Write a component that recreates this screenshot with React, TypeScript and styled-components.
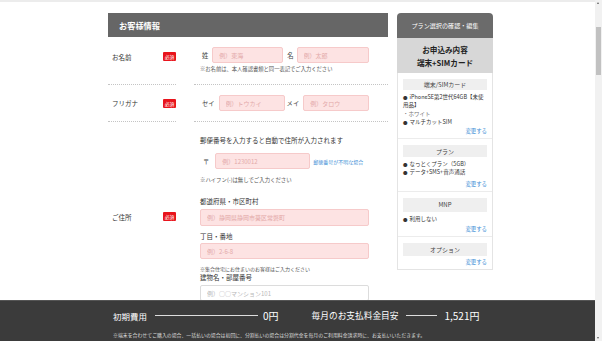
import React from "react";
import styled, { createGlobalStyle } from "styled-components";

const Global = createGlobalStyle`
  html, body { margin: 0; padding: 0; overflow: hidden; background: #fff; }
  body { font-family: "Noto Sans CJK JP", "Noto Sans", sans-serif; color: #333; }
  * { box-sizing: border-box; }
  input { font-family: inherit; }
`;

const Page = styled.div`
  width: 595px;
  height: 341px;
  border-top: 2px solid #ececec;
`;

const Container = styled.div`
  display: flex;
  gap: 9px;
  padding: 11px 0 0 108px;
`;

const Main = styled.section`
  width: 280px;
`;

const MainHeader = styled.h2`
  margin: 0;
  height: 24px;
  background: #666;
  color: #fff;
  font-size: 8.2px;
  font-weight: bold;
  display: flex;
  align-items: center;
  padding-left: 11px;
`;

const FormRow = styled.div`
  display: grid;
  grid-template-columns: 68px 1fr;
  column-gap: 18px;
`;

const LabelCell = styled.div<{ $shift?: number; $last?: boolean }>`
  display: flex;
  align-items: center;
  justify-content: space-between;
  padding-left: 4px;
  padding-bottom: ${(p) => p.$shift ?? 0}px;
  font-size: 6.5px;
  color: #333;
  border-bottom: ${(p) => (p.$last ? "none" : "1px dotted #c4c4c4")};
`;

const Badge = styled.span`
  width: 13px;
  height: 9px;
  background: #e8141c;
  color: #fff;
  font-size: 4.8px;
  display: flex;
  align-items: center;
  justify-content: center;
  border-radius: 1px;
`;

const ContentCell = styled.div<{ $pad: string; $last?: boolean }>`
  padding: ${(p) => p.$pad};
  border-bottom: ${(p) => (p.$last ? "none" : "1px dotted #c4c4c4")};
`;

const InputLine = styled.div`
  display: flex;
  align-items: center;
`;

const Caption = styled.span<{ $ml?: number; $mr?: number }>`
  font-size: 6.3px;
  color: #444;
  white-space: nowrap;
  margin-left: ${(p) => p.$ml ?? 0}px;
  margin-right: ${(p) => p.$mr ?? 0}px;
`;

const TextInput = styled.input<{ $w: number; $h?: number; $plain?: boolean }>`
  display: block;
  flex: none;
  width: ${(p) => p.$w}px;
  height: ${(p) => p.$h ?? 16}px;
  background: ${(p) => (p.$plain ? "#fff" : "#fde3e3")};
  border: 1px solid ${(p) => (p.$plain ? "#dcdcdc" : "#f6caca")};
  border-radius: 2px;
  font-size: 6px;
  padding: 0 6px;
  margin: 0;
  outline: none;
  &::placeholder {
    color: ${(p) => (p.$plain ? "#b8b8b8" : "#e3a9a9")};
  }
`;

const Note = styled.p<{ $mt?: number; $size?: number }>`
  margin: ${(p) => p.$mt ?? 0}px 0 0;
  font-size: ${(p) => p.$size ?? 5.4}px;
  line-height: 7px;
  color: #555;
`;

const Lead = styled.p<{ $mt?: number }>`
  margin: ${(p) => p.$mt ?? 0}px 0 0;
  font-size: 6.5px;
  line-height: 8px;
  color: #333;
`;

const FieldGap = styled.div<{ $mt: number }>`
  margin-top: ${(p) => p.$mt}px;
`;

const ZipLink = styled.a`
  margin-left: 3px;
  font-size: 5px;
  color: #3d8fd6;
  text-decoration: none;
  white-space: nowrap;
`;

/* Sidebar */
const Sidebar = styled.aside`
  width: 96px;
`;

const SideHeader = styled.div`
  height: 25px;
  background: #6b6b6b;
  border-radius: 4px 4px 0 0;
  color: #fff;
  font-size: 6.1px;
  display: flex;
  align-items: center;
  justify-content: center;
`;

const Summary = styled.div`
  height: 35px;
  background: #d7d7d7;
  display: flex;
  flex-direction: column;
  align-items: center;
  justify-content: center;
  font-size: 7.6px;
  font-weight: bold;
  color: #222;
`;

const SummaryLine = styled.div`
  height: 13px;
  line-height: 13px;
`;

const SideBody = styled.div`
  border: 1px solid #e4e4e4;
  border-top: none;
`;

const SideSection = styled.div<{ $last?: boolean }>`
  padding: 6px 5px 3px;
  border-bottom: ${(p) => (p.$last ? "none" : "1px solid #ececec")};
`;

const SectionTitle = styled.div<{ $h?: number }>`
  height: ${(p) => p.$h ?? 12}px;
  background: #efefef;
  font-size: 6px;
  color: #444;
  display: flex;
  align-items: center;
  justify-content: center;
`;

const ItemList = styled.ul`
  list-style: none;
  margin: 3px 0 0;
  padding: 0;
`;

const Item = styled.li<{ $sub?: boolean }>`
  font-size: 5.5px;
  line-height: 8.3px;
  color: ${(p) => (p.$sub ? "#777" : "#333")};
  &::before {
    content: "${(p) => (p.$sub ? "・" : "●")}";
    margin-right: ${(p) => (p.$sub ? 0 : 2)}px;
    font-size: ${(p) => (p.$sub ? 5.4 : 4.5)}px;
  }
`;

const ChangeLink = styled.div<{ $mt?: number }>`
  text-align: right;
  font-size: 5.4px;
  line-height: 8px;
  margin-top: ${(p) => p.$mt ?? 1}px;
  color: #3d8fd6;
`;

/* Bottom bar */
const BottomBar = styled.div`
  position: fixed;
  left: 0;
  top: 300px;
  width: 595px;
  height: 41px;
  background: #3b3b3b;
  border-top: 1px solid #555;
  color: #fff;
  padding: 9px 0 0 113px;
`;

const PriceRow = styled.div`
  display: flex;
  align-items: center;
  height: 11px;
`;

const PriceLabel = styled.span<{ $size: number }>`
  font-size: ${(p) => p.$size}px;
  white-space: nowrap;
`;

const Rule = styled.span<{ $w: number; $ml: number; $mr: number }>`
  flex: none;
  width: ${(p) => p.$w}px;
  height: 1px;
  background: #ddd;
  margin-left: ${(p) => p.$ml}px;
  margin-right: ${(p) => p.$mr}px;
`;

const PriceValue = styled.span<{ $mr?: number }>`
  font-size: 10px;
  white-space: nowrap;
  margin-right: ${(p) => p.$mr ?? 0}px;
`;

const BarNote = styled.p`
  margin: 10px 0 0;
  font-size: 4.9px;
  color: #ddd;
  white-space: nowrap;
`;

/* Scrollbar */
const ScrollTrack = styled.div`
  position: fixed;
  right: 0;
  top: 0;
  width: 7px;
  height: 341px;
  background: #f1f1f1;
`;

const ScrollThumb = styled.div`
  position: absolute;
  left: 1px;
  top: 27px;
  width: 5px;
  height: 48px;
  background: #c1c1c1;
`;

const Arrow = styled.div<{ $down?: boolean }>`
  position: absolute;
  left: 2px;
  ${(p) => (p.$down ? "bottom: 2px;" : "top: 2px;")}
  width: 0;
  height: 0;
  border-left: 1.5px solid transparent;
  border-right: 1.5px solid transparent;
  ${(p) => (p.$down ? "border-top: 2px solid #606060;" : "border-bottom: 2px solid #606060;")}
`;

export default function App() {
  return (
    <>
      <Global />
      <Page>
        <Container>
          <Main>
            <MainHeader>お客様情報</MainHeader>

            <FormRow>
              <LabelCell $shift={8}>
                お名前<Badge>必須</Badge>
              </LabelCell>
              <ContentCell $pad="10px 0 11px 6px">
                <InputLine>
                  <Caption $ml={2} $mr={4}>姓</Caption>
                  <TextInput $w={71} placeholder="例）東海" />
                  <Caption $ml={4} $mr={3}>名</Caption>
                  <TextInput $w={72} placeholder="例）太郎" />
                </InputLine>
                <Note $mt={3} $size={5.3}>※お名前は、本人確認書類と同一表記でご入力ください</Note>
              </ContentCell>
            </FormRow>

            <FormRow>
              <LabelCell>
                フリガナ<Badge>必須</Badge>
              </LabelCell>
              <ContentCell $pad="10px 0 10px 6px">
                <InputLine>
                  <Caption $ml={2} $mr={4}>セイ</Caption>
                  <TextInput $w={66} placeholder="例）トウカイ" />
                  <Caption $ml={2} $mr={4}>メイ</Caption>
                  <TextInput $w={66} placeholder="例）タロウ" />
                </InputLine>
              </ContentCell>
            </FormRow>

            <FormRow>
              <LabelCell $last>
                ご住所<Badge>必須</Badge>
              </LabelCell>
              <ContentCell $last $pad="14px 0 10px 6px">
                <Lead>郵便番号を入力すると自動で住所が入力されます</Lead>
                <FieldGap $mt={9}>
                  <InputLine>
                    <Caption $ml={3} $mr={6}>〒</Caption>
                    <TextInput $w={95} placeholder="例）1230012" />
                    <ZipLink>郵便番号が不明な場合</ZipLink>
                  </InputLine>
                </FieldGap>
                <Note $mt={8}>※ハイフン(-)は無しでご入力ください</Note>
                <Lead $mt={13}>都道府県・市区町村</Lead>
                <FieldGap $mt={4}>
                  <TextInput $w={169} $h={17} placeholder="例）静岡県静岡市葵区常磐町" />
                </FieldGap>
                <Lead $mt={6}>丁目・番地</Lead>
                <FieldGap $mt={3}>
                  <TextInput $w={169} placeholder="例）2-6-8" />
                </FieldGap>
                <Note $mt={6} $size={5}>※集合住宅にお住まいのお客様はご入力ください</Note>
                <Lead $mt={1}>建物名・部屋番号</Lead>
                <FieldGap $mt={4}>
                  <TextInput $plain $w={169} placeholder="例）○○マンション101" />
                </FieldGap>
              </ContentCell>
            </FormRow>
          </Main>

          <Sidebar>
            <SideHeader>プラン選択の確認・編集</SideHeader>
            <Summary>
              <SummaryLine>お申込み内容</SummaryLine>
              <SummaryLine>端末+SIMカード</SummaryLine>
            </Summary>
            <SideBody>
              <SideSection>
                <SectionTitle $h={11}>端末/SIMカード</SectionTitle>
                <ItemList>
                  <Item>iPhoneSE第2世代64GB【未使用品】</Item>
                  <Item $sub>ホワイト</Item>
                  <Item>マルチカットSIM</Item>
                </ItemList>
                <ChangeLink>変更する</ChangeLink>
              </SideSection>
              <SideSection>
                <SectionTitle>プラン</SectionTitle>
                <ItemList>
                  <Item>なっとくプラン（5GB）</Item>
                  <Item>データ+SMS+音声通話</Item>
                </ItemList>
                <ChangeLink $mt={3}>変更する</ChangeLink>
              </SideSection>
              <SideSection>
                <SectionTitle $h={14}>MNP</SectionTitle>
                <ItemList>
                  <Item>利用しない</Item>
                </ItemList>
                <ChangeLink $mt={2}>変更する</ChangeLink>
              </SideSection>
              <SideSection $last>
                <SectionTitle $h={13}>オプション</SectionTitle>
                <ChangeLink $mt={2}>変更する</ChangeLink>
              </SideSection>
            </SideBody>
          </Sidebar>
        </Container>
      </Page>

      <BottomBar>
        <PriceRow>
          <PriceLabel $size={8.5}>初期費用</PriceLabel>
          <Rule $w={103} $ml={8} $mr={5} />
          <PriceValue $mr={33}>0円</PriceValue>
          <PriceLabel $size={8.7}>毎月のお支払料金目安</PriceLabel>
          <Rule $w={31} $ml={8} $mr={7} />
          <PriceValue>1,521円</PriceValue>
        </PriceRow>
        <BarNote>
          ※端末を合わせてご購入の場合、一括払いの場合は初回に、分割払いの場合は分割代金を毎月のご利用料金請求時に、お支払いいただきます。
        </BarNote>
      </BottomBar>

      <ScrollTrack>
        <Arrow />
        <ScrollThumb />
        <Arrow $down />
      </ScrollTrack>
    </>
  );
}
